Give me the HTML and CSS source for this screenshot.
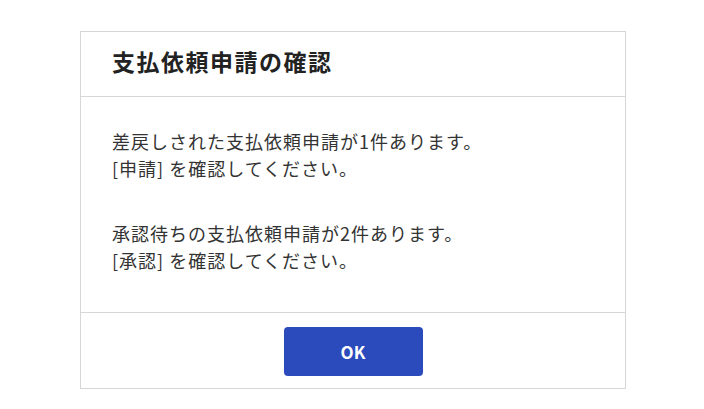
FILE: index.html
```html
<!DOCTYPE html>
<html lang="ja">
<head>
<meta charset="utf-8">
<link rel="stylesheet" href="styles.css">
</head>
<body>
<div class="dialog">
  <div class="dialog-header">
    <h1 class="dialog-title">支払依頼申請の確認</h1>
  </div>
  <div class="dialog-body">
    <p class="msg">差戻しされた支払依頼申請が1件あります。<br>[申請] を確認してください。</p>
    <p class="msg">承認待ちの支払依頼申請が2件あります。<br>[承認] を確認してください。</p>
  </div>
  <div class="dialog-footer">
    <button class="btn-ok">OK</button>
  </div>
</div>
</body>
</html>
```
FILE: styles.css
```css
html, body {
  margin: 0;
  padding: 0;
  background: #ffffff;
}
body {
  font-family: "Noto Sans CJK JP", "Noto Sans", sans-serif;
  color: #333333;
}
.dialog {
  box-sizing: border-box;
  width: 546px;
  margin: 31px 0 0 80px;
  border: 1px solid #d6d6d6;
  background: #fff;
}
.dialog-header {
  height: 65px;
  box-sizing: border-box;
  padding: 14px 0 0 31px;
  border-bottom: 1px solid #d6d6d6;
}
.dialog-title {
  margin: 0;
  font-size: 23px;
  line-height: 30px;
  font-weight: 700;
  color: #222222;
  letter-spacing: 1.5px;
}
.dialog-body {
  height: 216px;
  box-sizing: border-box;
  padding: 31px 31px 0 31px;
  border-bottom: 1px solid #d6d6d6;
}
.msg {
  margin: 0 0 38px 0;
  font-size: 18px;
  line-height: 27px;
  letter-spacing: 1px;
}
.dialog-footer {
  height: 75px;
  box-sizing: border-box;
  padding-top: 14px;
  display: flex;
  justify-content: center;
  align-items: flex-start;
}
.btn-ok {
  width: 139px;
  height: 49px;
  border: none;
  border-radius: 4px;
  background: #2b4bbd;
  color: #ffffff;
  font-family: "Noto Sans CJK JP", "Noto Sans", sans-serif;
  font-size: 17px;
  font-weight: 700;
  padding: 0;
}
```
